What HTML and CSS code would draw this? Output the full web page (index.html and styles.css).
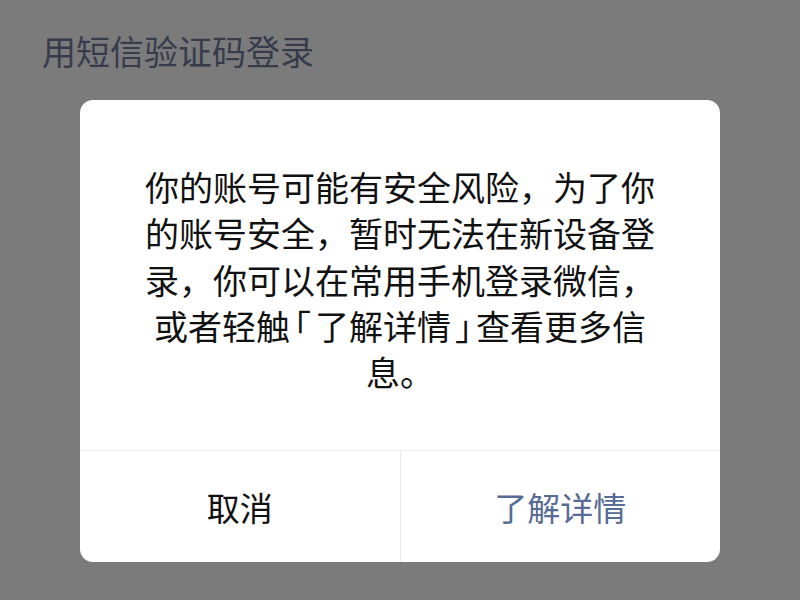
FILE: index.html
```html
<!DOCTYPE html>
<html lang="zh-CN">
<head>
<meta charset="utf-8">
<link rel="stylesheet" href="styles.css">
</head>
<body>
<div class="screen">
  <div class="title">用短信验证码登录</div>
  <div class="dialog">
    <div class="message">你的账号可能有安全风险，为了你的账号安全，暂时无法在新设备登录，你可以在常用手机登录微信，或者轻触<span class="half">「</span>了解详情<span class="half">」</span>查看更多信息。</div>
    <div class="actions">
      <div class="btn cancel">取消</div>
      <div class="btn more">了解详情</div>
    </div>
  </div>
</div>
</body>
</html>
```
FILE: styles.css
```css
html, body {
  margin: 0;
  padding: 0;
}
body {
  background: #7b7b7b;
  font-family: "Noto Sans CJK SC", "Noto Sans", sans-serif;
}
.screen {
  width: 800px;
  height: 600px;
  overflow: hidden;
}
.title {
  padding: 34px 0 0 42px;
  font-size: 34px;
  line-height: 33px;
  color: #363c4c;
}
.dialog {
  margin: 33px 0 0 80px;
  width: 640px;
  background: #ffffff;
  border-radius: 13px;
  overflow: hidden;
}
.message {
  padding: 64px 60px 55px;
  font-size: 34px;
  line-height: 46.3px;
  color: #111111;
  text-align: center;
}
.half {
  font-feature-settings: "halt" 1;
  margin: 0 4px;
}
.actions {
  display: flex;
  border-top: 1px solid #ececec;
  height: 111px;
}
.btn {
  flex: 1;
  display: flex;
  align-items: center;
  justify-content: center;
  font-size: 33px;
}
.cancel {
  color: #111111;
  border-right: 1px solid #ececec;
}
.more {
  color: #576b95;
}
```
